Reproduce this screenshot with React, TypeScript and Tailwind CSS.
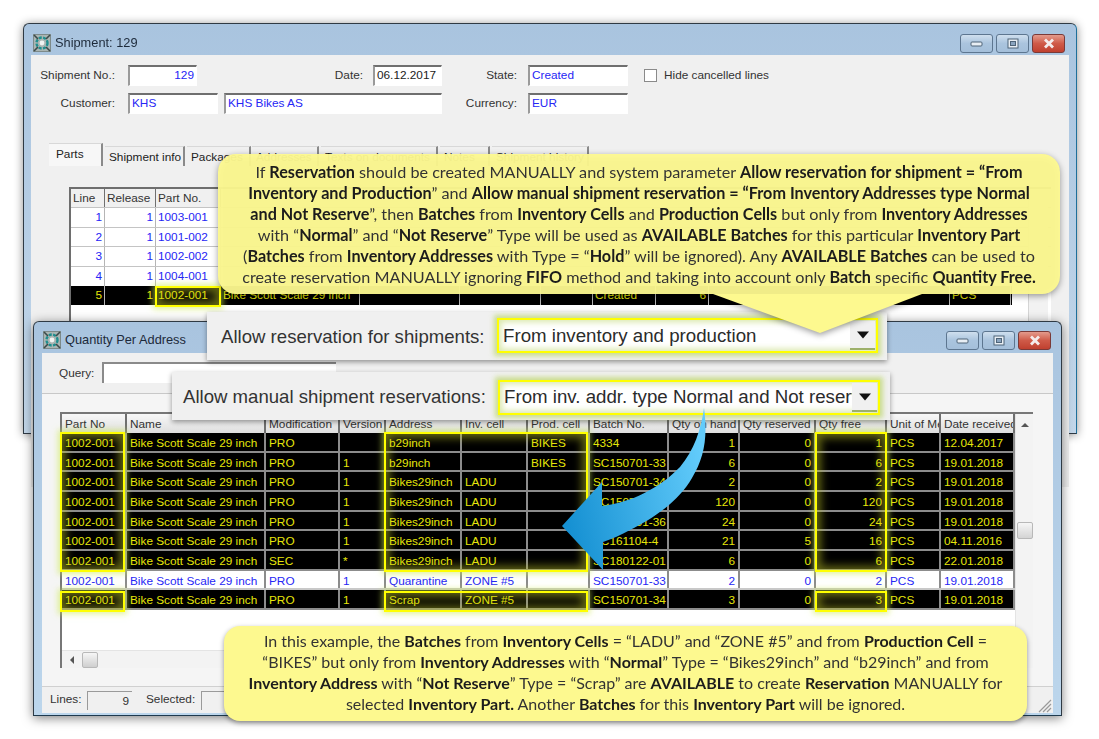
import React from "react";

const sans = "font-['Liberation_Sans',Arial,sans-serif]";
const callout = "font-['Lato','Noto_Sans',sans-serif]";

function AppIcon() {
  return (
    <svg width="18" height="18" viewBox="0 0 18 18" className="shrink-0">
      <rect width="18" height="18" fill="#7d8a8a" />
      <rect x="1" y="1" width="16" height="16" fill="#aab5b3" />
      <circle cx="9" cy="9" r="5.5" fill="none" stroke="#1f8f8f" strokeWidth="2.4" strokeDasharray="3 1.4" />
      <circle cx="9" cy="9" r="2.4" fill="#f0f4f2" />
      <path d="M1 1l4 4M17 1l-4 4M1 17l4-4M17 17l-4-4" stroke="#3c4a4a" strokeWidth="1.6" />
    </svg>
  );
}

function CaptionButtons() {
  const base = "h-[19px] w-[33px] rounded-[3px] border border-[#5d7690] flex items-center justify-center";
  return (
    <div className="flex gap-[3px]">
      <div className={`${base} bg-gradient-to-b from-[#cfdfee] via-[#aac4de] to-[#a4bfda]`}>
        <svg width="14" height="8" viewBox="0 0 14 8"><rect x="1" y="3" width="11" height="4" rx="1" fill="#e8eef4" stroke="#4f6478" /></svg>
      </div>
      <div className={`${base} bg-gradient-to-b from-[#cfdfee] via-[#aac4de] to-[#a4bfda]`}>
        <svg width="14" height="11" viewBox="0 0 14 11"><rect x="2" y="1" width="10" height="9" fill="#e8eef4" stroke="#4f6478" /><rect x="4.5" y="3.5" width="5" height="4" fill="#8aa4bf" stroke="#4f6478" /></svg>
      </div>
      <div className={`${base} border-[#7a3a38] bg-gradient-to-b from-[#e39a8c] via-[#cf5a48] to-[#c0402f]`}>
        <svg width="14" height="11" viewBox="0 0 14 11"><path d="M3 1.5l8 8M11 1.5l-8 8" stroke="#f4ecec" strokeWidth="2.8" /></svg>
      </div>
    </div>
  );
}

function Field({ className, align, children }: { className: string; align?: string; children?: React.ReactNode }) {
  return (
    <div className={`h-[21px] border-t-2 border-l-2 border-t-[#6f6f6f] border-l-[#9a9a9a] border-r border-b border-r-white border-b-white bg-white px-[2px] text-[11.8px] leading-[17px] text-[#2626f5] ${align ?? ""} ${className}`}>
      {children}
    </div>
  );
}

function Label({ className, children }: { className: string; children: React.ReactNode }) {
  return <div className={`text-right text-[11.8px] text-[#333] ${className}`}>{children}</div>;
}

function Tab({ className, active, children }: { className: string; active?: boolean; children: React.ReactNode }) {
  return (
    <div
      className={`whitespace-nowrap border-r-2 border-r-[#8a8a8a] border-t border-t-[#d8d8d8] text-[11.8px] text-[#222] ${
        active ? "h-[23px] bg-[#f7f7f7] pl-[7px] pt-[2px]" : "mt-[3px] h-[20px] bg-[#f0f0f0] px-[4px] pt-[2px]"
      } ${className}`}
    >
      {children}
    </div>
  );
}

function Glow({ className }: { className: string }) {
  return (
    <div className={`pointer-events-none absolute border-2 border-[#ffff00] shadow-[0_0_6px_2px_rgba(205,235,80,0.6),inset_0_0_9px_4px_rgba(200,205,40,0.5)] ${className}`} />
  );
}

const topRows = [
  ["1", "1", "1003-001"],
  ["2", "1", "1001-002"],
  ["3", "1", "1002-002"],
  ["4", "1", "1004-001"],
];

function TopGrid() {
  const cols = "grid grid-cols-[34px_51px_65px_139px_100px_81px_52px_63px_53px_241px_61px]";
  const cell = "overflow-hidden whitespace-nowrap border-r border-[#b5b5b5] px-[2px] leading-[18px]";
  return (
    <div className="relative ml-[38px] mt-[21px] h-[300px] w-[982px] border-l-2 border-t-2 border-[#6e6e6e] bg-white text-[11.8px]">
      <div className={`${cols} h-[18px] bg-[#f0f0f0] text-[#333]`}>
        <div className={`${cell} border-r-[#707070]`}>Line</div>
        <div className={`${cell} border-r-[#707070]`}>Release</div>
        <div className={`${cell} border-r-[#707070]`}>Part No.</div>
      </div>
      {topRows.map((r) => (
        <div key={r[0]} className={`${cols} h-[19.67px] border-t border-[#c4c4c4] text-[#2626f5]`}>
          <div className={`${cell} text-right`}>{r[0]}</div>
          <div className={`${cell} text-right`}>{r[1]}</div>
          <div className={cell}>{r[2]}</div>
        </div>
      ))}
      <div className={`${cols} h-[19.67px] w-[941px] bg-black text-[#e6e60a]`}>
        <div className={`${cell} border-[#555] text-right`}>5</div>
        <div className={`${cell} border-[#555] text-right`}>1</div>
        <div className={`${cell} border-[#555]`}>1002-001</div>
        <div className={`${cell} border-[#555]`}>Bike Scott Scale 29 inch</div>
        <div className={`${cell} border-[#555]`} />
        <div className={`${cell} border-[#555]`} />
        <div className={`${cell} border-[#555]`} />
        <div className={`${cell} border-[#555]`}>Created</div>
        <div className={`${cell} border-[#555] text-right`}>6</div>
        <div className={`${cell} border-[#555]`} />
        <div className={`${cell} border-0`}>PCS</div>
      </div>
      <Glow className="left-[84px] top-[97px] h-[21px] w-[66px]" />
      <div className="absolute right-[3px] top-0 h-full w-[20px] border-l border-[#d5d5d5] bg-[#f2f2f2]" />
    </div>
  );
}

type Row = { n: string; m: string; v: string; a: string; i: string; p: string; b: string; h: string; r: string; f: string; d: string; blue?: boolean };

const rows: Row[] = [
  { n: "Bike Scott Scale 29 inch", m: "PRO", v: "", a: "b29inch", i: "", p: "BIKES", b: "4334", h: "1", r: "0", f: "1", d: "12.04.2017" },
  { n: "Bike Scott Scale 29 inch", m: "PRO", v: "1", a: "b29inch", i: "", p: "BIKES", b: "SC150701-33", h: "6", r: "0", f: "6", d: "19.01.2018" },
  { n: "Bike Scott Scale 29 inch", m: "PRO", v: "1", a: "Bikes29inch", i: "LADU", p: "", b: "SC150701-34", h: "2", r: "0", f: "2", d: "19.01.2018" },
  { n: "Bike Scott Scale 29 inch", m: "PRO", v: "1", a: "Bikes29inch", i: "LADU", p: "", b: "SC150701-35", h: "120", r: "0", f: "120", d: "19.01.2018" },
  { n: "Bike Scott Scale 29 inch", m: "PRO", v: "1", a: "Bikes29inch", i: "LADU", p: "", b: "SC150701-36", h: "24", r: "0", f: "24", d: "19.01.2018" },
  { n: "Bike Scott Scale 29 inch", m: "PRO", v: "1", a: "Bikes29inch", i: "LADU", p: "", b: "SC161104-4", h: "21", r: "5", f: "16", d: "04.11.2016" },
  { n: "Bike Scott Scale 29 inch", m: "SEC", v: "*", a: "Bikes29inch", i: "LADU", p: "", b: "SC180122-01", h: "6", r: "0", f: "6", d: "22.01.2018" },
  { n: "Bike Scott Scale 29 inch", m: "PRO", v: "1", a: "Quarantine", i: "ZONE #5", p: "", b: "SC150701-33", h: "2", r: "0", f: "2", d: "19.01.2018", blue: true },
  { n: "Bike Scott Scale 29 inch", m: "PRO", v: "1", a: "Scrap", i: "ZONE #5", p: "", b: "SC150701-34", h: "3", r: "0", f: "3", d: "19.01.2018" },
];

const heads = ["Part No", "Name", "Modification", "Version", "Address", "Inv. cell", "Prod. cell", "Batch No.", "Qty on hand", "Qty reserved", "Qty free", "Unit of Me", "Date received"];
const gridCols = "grid grid-cols-[65px_139px_74px_46px_76px_66px_62px_79px_71px_76px_71px_54px_74px]";

function BottomGrid() {
  return (
    <div className="relative ml-[18px] mt-[18px] h-[256px] w-[973px] border-t-2 border-l-2 border-[#777] bg-white text-[11.8px]">
      <div className={`${gridCols} h-[19px] w-[953px] bg-gradient-to-b from-[#f8f8f8] to-[#dedede] text-[#333]`}>
        {heads.map((h) => (
          <div key={h} className="overflow-hidden whitespace-nowrap border-r-2 border-[#6f6f6f] pl-[3px] leading-[20px]">{h}</div>
        ))}
      </div>
      {rows.map((r, idx) => {
        const skin = r.blue
          ? "bg-white text-[#2626f5] border-[#c8c8c8]"
          : "bg-black text-[#e6e60a] border-[#8c8c8c]";
        const c = `overflow-hidden whitespace-nowrap border-r-2 border-[#8c8c8c] px-[3px] leading-[20px]`;
        return (
          <div key={idx} className={`${gridCols} h-[19.67px] w-[953px] border-b-2 ${skin}`}>
            <div className={c}>1002-001</div>
            <div className={c}>{r.n}</div>
            <div className={c}>{r.m}</div>
            <div className={c}>{r.v}</div>
            <div className={c}>{r.a}</div>
            <div className={c}>{r.i}</div>
            <div className={c}>{r.p}</div>
            <div className={c}>{r.b}</div>
            <div className={`${c} text-right`}>{r.h}</div>
            <div className={`${c} text-right`}>{r.r}</div>
            <div className={`${c} text-right`}>{r.f}</div>
            <div className={c}>PCS</div>
            <div className={c}>{r.d}</div>
          </div>
        );
      })}

      <Glow className="left-[-2px] top-[18px] h-[140px] w-[65px]" />
      <Glow className="left-[-2px] top-[177px] h-[21px] w-[65px]" />
      <Glow className="left-[322px] top-[18px] h-[140px] w-[204px]" />
      <Glow className="left-[322px] top-[177px] h-[21px] w-[204px]" />
      <Glow className="left-[753px] top-[18px] h-[140px] w-[72px]" />
      <Glow className="left-[753px] top-[177px] h-[21px] w-[72px]" />

      <div className="absolute bottom-0 right-0 top-0 flex w-[18px] flex-col items-center border-l border-[#e4e4e4] bg-[#f3f3f3]">
        <svg width="10" height="6" viewBox="0 0 10 6" className="mt-[8px]"><path d="M5 1L9 5H1z" fill="#555" /></svg>
        <div className="mt-[94px] h-[17px] w-[16px] rounded-[2px] border border-[#b8b8b8] bg-gradient-to-b from-[#f6f6f6] to-[#d4d4d4]" />
      </div>
      <div className="absolute bottom-0 left-0 right-[18px] flex h-[18px] items-center border-t border-[#e4e4e4] bg-[#f3f3f3]">
        <svg width="6" height="10" viewBox="0 0 6 10" className="ml-[7px]"><path d="M1 5L5 1V9z" fill="#555" /></svg>
        <div className="ml-[7px] h-[16px] w-[16px] rounded-[2px] border border-[#b8b8b8] bg-gradient-to-b from-[#f6f6f6] to-[#cfcfcf]" />
      </div>
    </div>
  );
}

function Combo({ text, label, className, labelClass, boxClass, textClass }: { text: string; label: string; className: string; labelClass: string; boxClass: string; textClass: string }) {
  return (
    <div className={`absolute flex h-[48px] items-center bg-[#f0f0f0] shadow-[0_2px_5px_rgba(0,0,0,0.4)] ${className}`}>
      <div className={`whitespace-nowrap text-[18.6px] text-[#333] ${labelClass}`}>{label}</div>
      <div className={`absolute flex h-[35px] items-center justify-between border-2 border-[#ffff00] bg-white shadow-[0_0_5px_3px_rgba(190,215,110,0.75),inset_0_0_6px_2px_rgba(190,215,110,0.6)] ${boxClass}`}>
        <div className={`overflow-hidden whitespace-nowrap text-[18.7px] text-[#2b2b2b] ${textClass}`}>{text}</div>
        <div className="mr-[1px] flex h-[29px] w-[25px] items-center justify-center border-b-2 border-b-[#9db06a] bg-[#f0f0f0]">
          <svg width="14" height="8" viewBox="0 0 14 8"><path d="M1 0.5h12L7 7.5z" fill="#111" /></svg>
        </div>
      </div>
    </div>
  );
}

function B({ children }: { children: React.ReactNode }) {
  return <b className="font-bold text-[#1c1c1c]">{children}</b>;
}

export default function App() {
  return (
    <div className={`relative h-[739px] w-[1099px] overflow-hidden bg-white ${sans}`}>
      <div className="absolute inset-0 blur-[0.35px]">
        {/* Shipment window */}
        <div className="absolute left-[23px] top-[23px] flex h-[411px] w-[1054px] flex-col rounded-t-[6px] border border-[#2f3a44] border-r-[#1e6f9a] bg-gradient-to-b from-[#a9c4df] to-[#c3d7ea] shadow-[0_1px_10px_rgba(0,0,0,0.45)]">
          <div className="flex h-[31px] shrink-0 items-center justify-between pl-[9px] pr-[11px] pt-[7px]">
            <div className="flex items-center gap-[4px] text-[12.8px] text-[#1d2a3a]">
              <AppIcon />
              <span>Shipment: 129</span>
            </div>
            <CaptionButtons />
          </div>
          <div className="mx-[7px] flex-1 bg-[#f0f0f0]">
            <div className="mt-[10px] flex h-[21px] items-center">
              <Label className="w-[84px]">Shipment No.:</Label>
              <Field className="ml-[13px] w-[69px]" align="text-right">129</Field>
              <Label className="w-[166px]">Date:</Label>
              <Field className="ml-[10px] w-[69px] !text-[#222]">06.12.2017</Field>
              <Label className="w-[75px]">State:</Label>
              <Field className="ml-[11px] w-[100px]">Created</Field>
              <div className="ml-[16px] h-[13px] w-[13px] border border-[#8a8a8a] bg-white" />
              <div className="ml-[7px] text-[11.8px] text-[#333]">Hide cancelled lines</div>
            </div>
            <div className="mt-[7px] flex h-[21px] items-center">
              <Label className="w-[84px]">Customer:</Label>
              <Field className="ml-[13px] w-[90px]">KHS</Field>
              <Field className="ml-[6px] w-[218px]">KHS Bikes AS</Field>
              <Label className="w-[75px]">Currency:</Label>
              <Field className="ml-[11px] w-[100px]">EUR</Field>
            </div>
            <div className="ml-[18px] mt-[29px] flex">
              <Tab active className="w-[54px]">Parts</Tab>
              <Tab className="ml-[2px] w-[80px]">Shipment info</Tab>
              <Tab className="ml-[2px] w-[64px]">Packages</Tab>
              <Tab className="ml-[1px] w-[67px]">Addresses</Tab>
              <Tab className="ml-[2px] w-[117px]">Texts on documents</Tab>
              <Tab className="ml-[2px] w-[50px]">Notes</Tab>
              <Tab className="ml-[2px] w-[97px]">Shipment history</Tab>
            </div>
            <TopGrid />
          </div>
        </div>

        {/* Quantity Per Address window */}
        <div className="absolute left-[33px] top-[321px] flex h-[395px] w-[1029px] flex-col rounded-t-[6px] border border-[#2f3a44] border-b-[#1e3a4e] bg-gradient-to-b from-[#a9c4df] to-[#bcd6ec] shadow-[0_2px_11px_rgba(0,0,0,0.5)]">
          <div className="flex h-[31px] shrink-0 items-center justify-between pl-[9px] pr-[10px] pt-[5px]">
            <div className="flex items-center gap-[4px] text-[12.8px] text-[#1d2a3a]">
              <AppIcon />
              <span>Quantity Per Address</span>
            </div>
            <CaptionButtons />
          </div>
          <div className="mx-[8px] mb-[2px] flex flex-1 flex-col bg-[#f5f5f5]">
            <div className="flex h-[41px] shrink-0 items-start border-b border-[#c8c8c8] bg-[#f0f0f0] pt-[9px]">
              <div className="ml-[17px] w-[43px] pt-[3px] text-[11.8px] text-[#333]">Query:</div>
              <div className="h-[21px] w-[234px] border-l-2 border-t-2 border-[#8a8a8a] bg-white" />
            </div>
            <BottomGrid />
            <div className="mt-[18px] flex h-[28px] flex-1 items-center justify-between border-t border-[#d0d0d0] bg-[#f0f0f0]">
              <div className="flex items-center text-[11.8px] text-[#333]">
                <div className="ml-[8px] w-[37px]">Lines:</div>
                <div className="h-[19px] w-[45px] border-l border-t border-[#9a9a9a] pr-[3px] text-right leading-[19px]">9</div>
                <div className="ml-[14px] w-[55px]">Selected:</div>
                <div className="h-[19px] w-[46px] border-l border-t border-[#9a9a9a] pr-[3px] text-right leading-[19px]">0</div>
              </div>
              <svg width="16" height="16" viewBox="0 0 16 16" className="mr-[1px] mt-[10px]"><path d="M15 3L3 15M15 7l-8 8M15 11l-4 4" stroke="#9a9a9a" strokeWidth="1.2" /></svg>
            </div>
          </div>
        </div>

        <Combo
          className="left-[207px] top-[312px] w-[680px]"
          labelClass="ml-[14px] pt-[1px]"
          boxClass="right-[9px] top-[6px] w-[381px]"
          textClass="w-[351px] pl-[4px] pt-[1px]"
          label="Allow reservation for shipments:"
          text="From inventory and production"
        />
        <Combo
          className="left-[172px] top-[372px] w-[718px]"
          labelClass="ml-[11px] pt-[1px]"
          boxClass="right-[10px] top-[8px] w-[382px]"
          textClass="w-[352px] pl-[4px]"
          label="Allow manual shipment reservations:"
          text="From inv. addr. type Normal and Not reserve"
        />

        {/* Blue curved arrow */}
        <svg className="absolute left-[555px] top-[400px]" width="160" height="180" viewBox="555 400 160 180">
          <defs>
            <linearGradient id="arrowFill" x1="0" y1="0.6" x2="1" y2="0.35">
              <stop offset="0" stopColor="#1590d2" />
              <stop offset="1" stopColor="#63ccfb" />
            </linearGradient>
          </defs>
          <path
            d="M704 408 C708 438 704 458 692 478 C678 502 654 518 630 530 C621 535 612 539 603 542 L603 570 L562 526 L602 482 L602 506 C630 503 660 488 680 467 C694 450 701 430 704 408 Z"
            fill="url(#arrowFill)"
          />
        </svg>

        {/* Top callout */}
        <div className="absolute left-[218px] top-[154px] drop-shadow-[0_2px_3px_rgba(0,0,0,0.4)]">
          <div className={`relative h-[140px] w-[842px] rounded-[18px] bg-[#fdf98f]/95 pt-[7px] text-center text-[16.2px] leading-[21px] text-[#333] ${callout}`}>
            <div>If <B>Reservation</B> should be created MANUALLY and system parameter <B>Allow reservation for shipment = “From</B></div>
            <div><B>Inventory and Production</B>”  and <B>Allow manual shipment reservation = “From Inventory Addresses type Normal</B></div>
            <div><B>and Not Reserve</B>”, then <B>Batches</B> from <B>Inventory Cells</B> and <B>Production Cells</B> but only from <B>Inventory Addresses</B></div>
            <div>with “<B>Normal</B>” and “<B>Not Reserve</B>” Type will be used as <B>AVAILABLE Batches</B> for this particular <B>Inventory Part</B></div>
            <div>(<B>Batches</B> from <B>Inventory Addresses</B> with Type = “<B>Hold</B>” will be ignored). Any <B>AVAILABLE Batches</B> can be used to</div>
            <div>create reservation MANUALLY ignoring <B>FIFO</B> method and taking into account only <B>Batch</B> specific <B>Quantity Free.</B></div>
          </div>
          <svg className="absolute left-[495px] top-[140px]" width="209" height="39" viewBox="0 0 209 39">
            <path d="M0 0L107 39L209 0Z" fill="#fdf98f" />
          </svg>
        </div>

        {/* Bottom callout */}
        <div className={`absolute left-[224px] top-[626px] h-[95px] w-[803px] rounded-[16px] bg-[#fdf98f] pt-[4px] text-center text-[16px] leading-[21px] text-[#333] shadow-[0_2px_5px_rgba(0,0,0,0.4)] ${callout}`}>
          <div>In this example, the <B>Batches</B> from <B>Inventory Cells</B> = “LADU” and “ZONE #5” and from <B>Production Cell</B> =</div>
          <div>“BIKES” but only from <B>Inventory Addresses</B> with “<B>Normal</B>” Type = “Bikes29inch” and “b29inch” and from</div>
          <div><B>Inventory Address</B> with “<B>Not Reserve</B>” Type = “Scrap” are <B>AVAILABLE</B> to create <B>Reservation</B> MANUALLY for</div>
          <div>selected <B>Inventory Part.</B> Another <B>Batches</B> for this <B>Inventory Part</B> will be ignored.</div>
        </div>
      </div>
    </div>
  );
}
